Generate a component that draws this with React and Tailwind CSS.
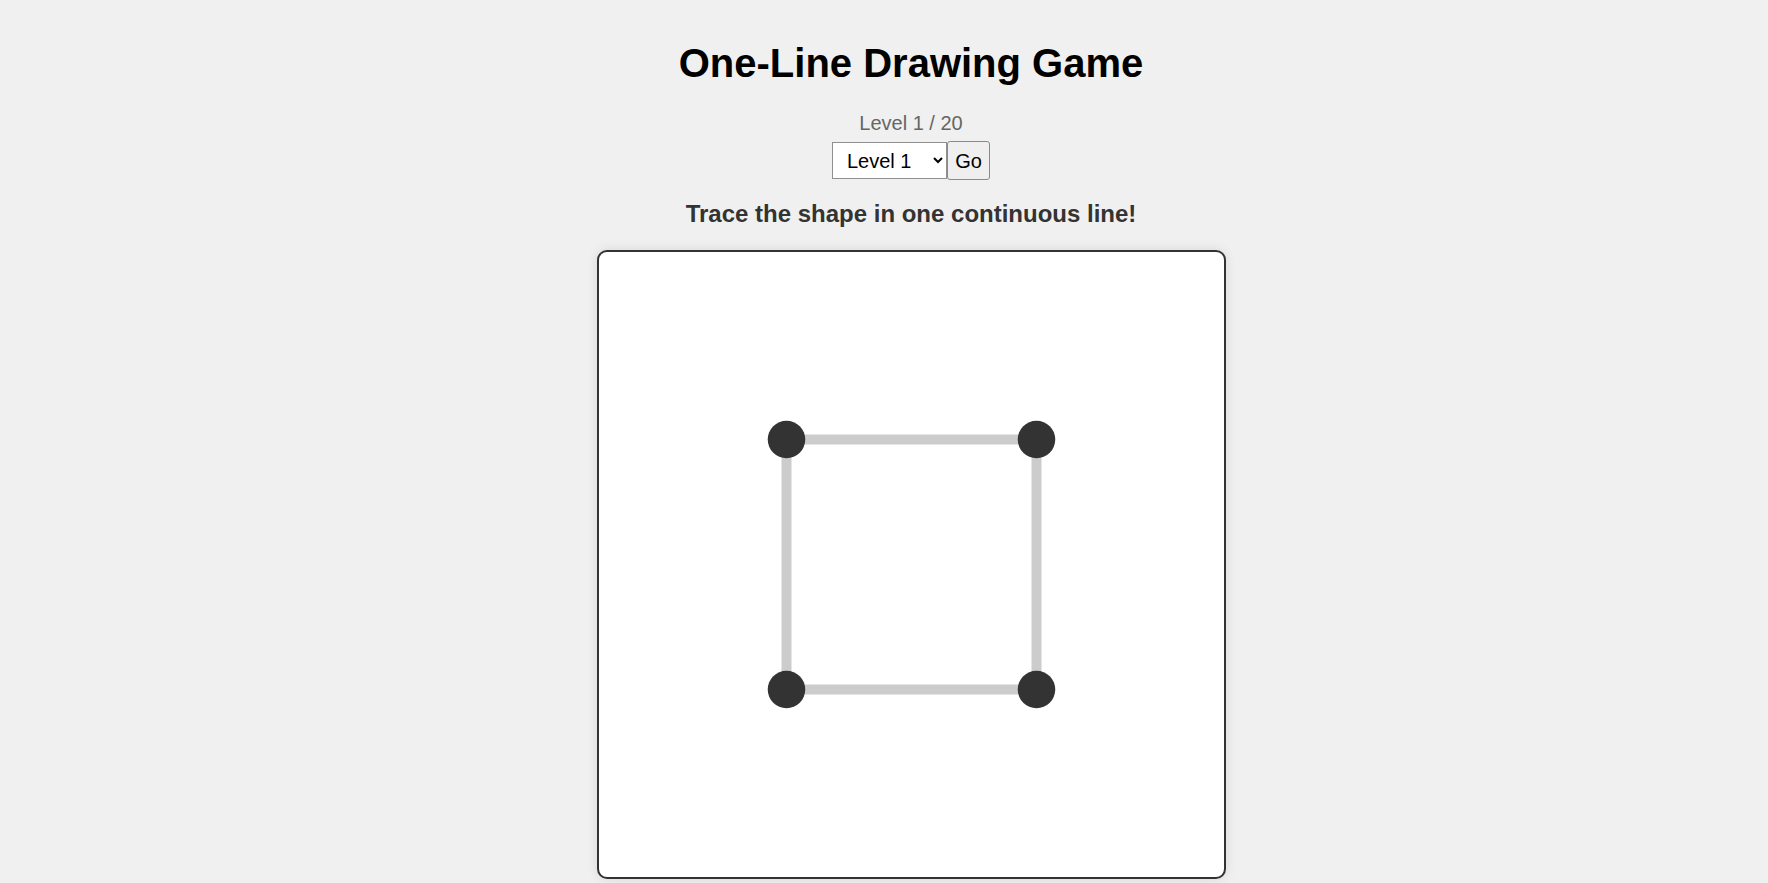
import React, { useState } from 'react';

const LEVELS = Array.from({ length: 20 }, (_, i) => i + 1);

// square for level 1, coords in the 625px board
const nodes = [
    [187.5, 187.5],
    [437.5, 187.5],
    [437.5, 437.5],
    [187.5, 437.5],
];
const edges = [[0, 1], [1, 2], [2, 3], [3, 0]];

const App = () => {
    const [level, setLevel] = useState(1);

    return (
        <div className="min-h-screen bg-[#f0f0f0] pl-[54px] font-['Liberation_Sans',Arial,sans-serif]">
            <div className="flex flex-col items-center pt-[40px]">
                <h1 className="text-[40px] leading-[46px] font-bold text-black">One-Line Drawing Game</h1>

                <div className="mt-[26px] text-[20px] leading-[23px] text-[#666]">Level {level} / 20</div>

                <div className="mt-[6px] flex items-center">
                    <select
                        value={level}
                        onChange={e => setLevel(Number(e.target.value))}
                        className="h-[37px] w-[115px] border border-[#8f8f8f] bg-white pl-[10px] text-[20px] text-black"
                    >
                        {LEVELS.map(n => (
                            <option key={n} value={n}>Level {n}</option>
                        ))}
                    </select>
                    <button className="h-[39px] w-[43px] rounded-[3px] border border-[#8a8a8a] bg-[#efefef] text-[20px] text-black">
                        Go
                    </button>
                </div>

                <h3 className="mt-[20px] text-[24px] leading-[28px] font-bold text-[#333]">
                    Trace the shape in one continuous line!
                </h3>

                {/* Board */}
                <div className="mt-[22px] mb-[20px] rounded-[10px] border-[2.5px] border-[#333] bg-white shadow-[0_0_12px_rgba(0,0,0,0.1)]">
                    <svg width="625" height="625" viewBox="0 0 625 625" className="block">
                        {edges.map(([a, b], i) => (
                            <line
                                key={i}
                                x1={nodes[a][0]}
                                y1={nodes[a][1]}
                                x2={nodes[b][0]}
                                y2={nodes[b][1]}
                                stroke="#ccc"
                                strokeWidth="10"
                            />
                        ))}
                        {nodes.map(([x, y], i) => (
                            <circle key={i} cx={x} cy={y} r="18.75" fill="#333" />
                        ))}
                    </svg>
                </div>
            </div>
        </div>
    );
};

export default App;
